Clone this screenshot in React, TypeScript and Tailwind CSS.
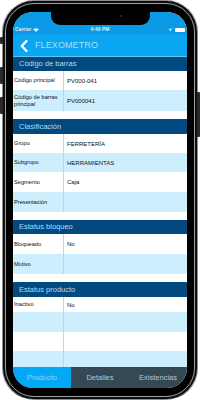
import React from 'react'

interface Fila {
  label: string
  valor?: string
  h: string
}

interface Seccion {
  titulo: string
  h: string
  filas: Fila[]
}

const secciones: Seccion[] = [
  {
    titulo: 'Código de barras',
    h: 'h-[14px]',
    filas: [
      { label: 'Código principal', valor: 'PV000-041', h: 'h-[19px]' },
      { label: 'Código de barras principal', valor: 'PV000041', h: 'h-[21px]' },
    ],
  },
  {
    titulo: 'Clasificación',
    h: 'h-[15px]',
    filas: [
      { label: 'Grupo', valor: 'FERRETERÍA', h: 'h-[19px]' },
      { label: 'Subgrupo', valor: 'HERRAMIENTAS', h: 'h-[19px]' },
      { label: 'Segmento', valor: 'Caja', h: 'h-[20px]' },
      { label: 'Presentación', h: 'h-[20px]' },
    ],
  },
  {
    titulo: 'Estatus bloqueo',
    h: 'h-[14px]',
    filas: [
      { label: 'Bloqueado', valor: 'No', h: 'h-[20px]' },
      { label: 'Motivo', h: 'h-[20px]' },
    ],
  },
  {
    titulo: 'Estatus producto',
    h: 'h-[15px]',
    filas: [
      { label: 'Inactivo', valor: 'No', h: 'h-[15px]' },
      { label: '', h: 'h-[20px]' },
      { label: '', h: 'h-[19px]' },
      { label: '', h: 'h-[20px]' },
    ],
  },
]

function StatusBar() {
  return (
    <div className="h-[23px] shrink-0 bg-[#0b9ae5] flex items-end justify-between px-[2px] pb-[3px] text-[5px] font-bold text-[#d8f0fd] leading-none">
      <div className="flex items-center gap-[2px] w-[40px]">
        <span>Carrier</span>
        <svg width="6" height="4" viewBox="0 0 6 4">
          <path d="M0 1.2 Q3 -0.6 6 1.2 L3 4 Z" fill="#d8f0fd" />
        </svg>
      </div>
      <span>4:49 PM</span>
      <div className="flex items-center justify-end gap-[3px] w-[40px]">
        <svg width="4" height="4" viewBox="0 0 4 4">
          <path d="M4 0 L0 1.7 L1.9 2 L2.2 4 Z" fill="#d8f0fd" />
        </svg>
        <div className="w-[10px] h-[4px] rounded-[1px] bg-white" />
      </div>
    </div>
  )
}

function NavBar() {
  return (
    <div className="h-[22px] shrink-0 bg-[#0aa6f1] flex items-center border-b border-[#5cc6f5]">
      <svg className="ml-[7px]" width="8" height="12" viewBox="0 0 8 12">
        <polyline points="6.5,1 1.8,6 6.5,11" fill="none" stroke="#ffffff" strokeWidth="2.4" strokeLinecap="round" strokeLinejoin="round" />
      </svg>
      <span className="ml-[7px] text-[9px] tracking-[0.1px] text-[#a9defa] leading-none">FLEXOMETRO</span>
    </div>
  )
}

function TabBar() {
  const tabs = ['Producto', 'Detalles', 'Existencias']
  return (
    <div className="h-[21px] shrink-0 grid grid-cols-3 bg-[#344955] text-[7.5px] leading-none">
      {tabs.map((t, i) => (
        <div
          key={t}
          className={
            i === 0
              ? 'flex items-center justify-center bg-[#03a9f4] text-[#86d6fb]'
              : 'flex items-center justify-center text-[#b7c6ce]'
          }
        >
          {t}
        </div>
      ))}
    </div>
  )
}

function Contenido() {
  return (
    <div className="flex-1 min-h-0 overflow-hidden bg-white">
      {secciones.map((s, si) => (
        <div key={s.titulo} className={si > 0 ? 'mt-[8px]' : ''}>
          <div className={`${s.h} bg-[#02497f] flex items-center pl-[6px] text-[7.5px] text-[#b3dbf4] leading-none`}>
            {s.titulo}
          </div>
          {s.filas.map((f, fi) => (
            <div
              key={fi}
              className={`${f.h} flex ${fi % 2 === 1 ? 'bg-[#cdeefc]' : 'bg-white'}`}
            >
              <div className="w-[51px] shrink-0 border-r border-[#a9dcf1] flex items-center pl-[1px] pr-[2px] text-[5.7px] leading-[7px] text-[#111]">
                {f.label}
              </div>
              <div className="flex-1 flex items-center pl-[3px] text-[6px] leading-none text-[#111]">
                {f.valor}
              </div>
            </div>
          ))}
        </div>
      ))}
    </div>
  )
}

export default function App() {
  return (
    <div className="relative w-[200px] h-[400px] overflow-hidden bg-white font-['Liberation_Sans',Arial,sans-serif]">
      {/* botones laterales */}
      <div className="absolute left-0 top-[37px] w-[3px] h-[7px] bg-[#2a2a2a] rounded-l-[1px]" />
      <div className="absolute left-0 top-[67px] w-[3px] h-[17px] bg-[#2a2a2a] rounded-l-[1px]" />
      <div className="absolute left-0 top-[97px] w-[3px] h-[17px] bg-[#2a2a2a] rounded-l-[1px]" />
      <div className="absolute right-0 top-[92px] w-[3px] h-[45px] bg-[#2a2a2a] rounded-r-[1px]" />

      {/* cuerpo del teléfono */}
      <div className="ml-[2px] w-[196px] h-[400px] rounded-[32px] bg-[#8c8c8c] p-[1px]">
        <div className="h-full rounded-[31px] bg-[#0d0d0d] p-[2px]">
          <div className="h-full rounded-[29px] border border-[#a2a2a2] bg-black pt-[8px] px-[7px] pb-[8px]">
            <div className="relative h-[376px] rounded-[20px] overflow-hidden bg-white flex flex-col">
              {/* notch */}
              <div className="absolute left-[38px] top-0 w-[99px] h-[13px] rounded-b-[9px] bg-black">
                <div className="absolute left-[69px] top-[3px] w-[2px] h-[2px] rounded-full bg-[#1b3a6b]" />
              </div>
              <StatusBar />
              <NavBar />
              <Contenido />
              <TabBar />
            </div>
          </div>
        </div>
      </div>
    </div>
  )
}
